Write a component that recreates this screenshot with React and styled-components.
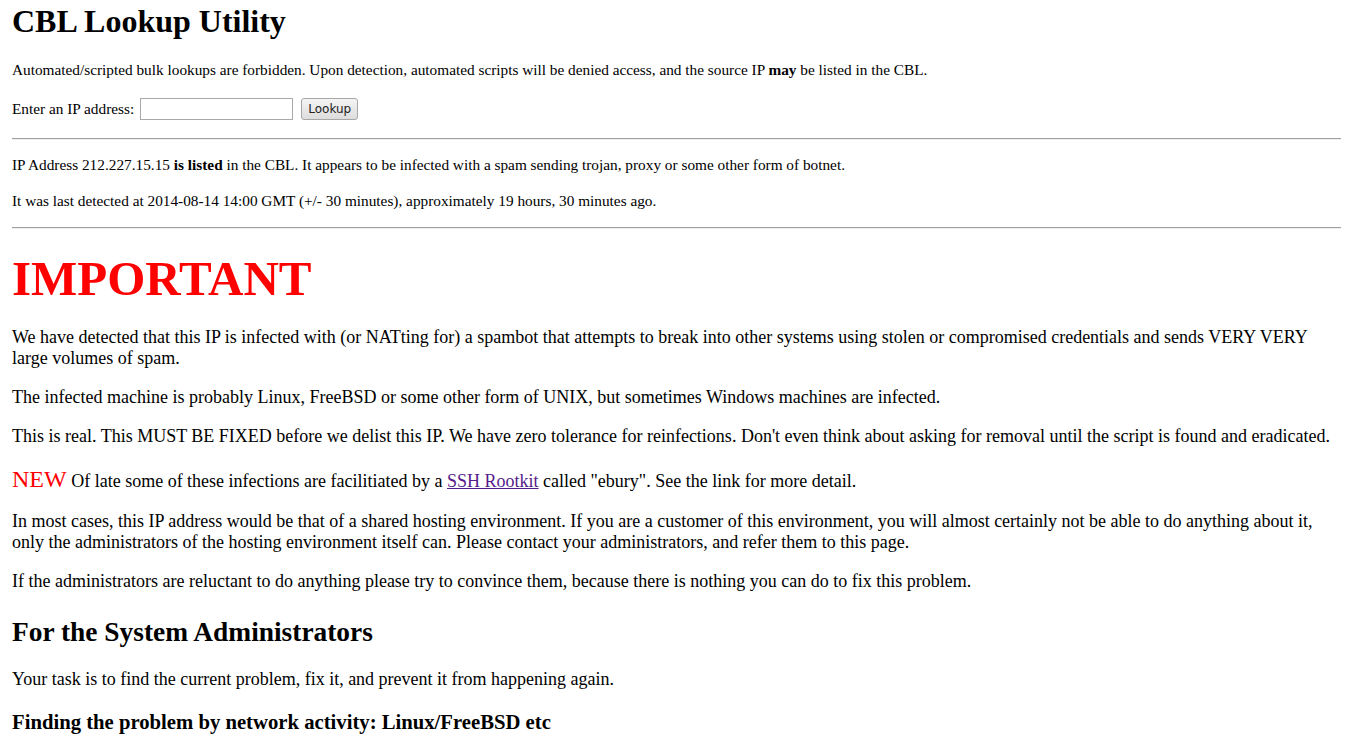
import styled, { createGlobalStyle } from 'styled-components';

const Global = createGlobalStyle`
  html, body {
    margin: 0;
    padding: 0;
    background: #fff;
  }
  body {
    font-family: "Liberation Serif", "Times New Roman", serif;
    color: #000;
  }
`;

const Page = styled.div`
  padding: 3px 10px 0 12px;
`;

const Title = styled.h1`
  font-size: 32px;
  font-weight: bold;
  margin: 0 0 22px;
  line-height: 36px;
`;

const Small = styled.p`
  font-size: 15.3px;
  line-height: 18px;
  margin: 0 0 ${p => p.$gap ?? 18}px;
`;

const Form = styled.form`
  display: flex;
  align-items: center;
  font-size: 15.3px;
  height: 22px;
  margin-bottom: 18px;
`;

const Label = styled.span`
  margin-right: 6px;
`;

const Input = styled.input`
  box-sizing: border-box;
  width: 153px;
  height: 22px;
  border: 1px solid #a9a9a9;
  padding: 1px 3px;
  margin: 0 8px 0 0;
  font-size: 14px;
`;

const Button = styled.button`
  box-sizing: border-box;
  width: 57px;
  height: 22px;
  padding: 0;
  font-family: "DejaVu Sans", Tahoma, sans-serif;
  font-size: 12px;
  color: #222;
  border: 1px solid #a7a7a7;
  border-radius: 3px;
  background: linear-gradient(#f4f4f4, #dddddd);
`;

const Rule = styled.hr`
  border: none;
  border-top: 1px solid #a0a0a0;
  border-bottom: 1px solid #eee;
  margin: 0 0 ${p => p.$after}px;
`;

const Alert = styled.h1`
  color: #ff0000;
  font-size: 49px;
  line-height: 56px;
  font-weight: bold;
  margin: 0 0 20px;
`;

const Para = styled.p`
  font-size: 18px;
  line-height: 21px;
  margin: 0 0 18px;
  padding: ${p => (p.$tall ? '4px 0 1px' : '0')};
`;

const Badge = styled.span`
  color: #ff0000;
  font-size: 24px;
`;

const Link = styled.a`
  color: #551a8b;
`;

const Section = styled.h2`
  font-size: 27.4px;
  line-height: 32px;
  font-weight: bold;
  margin: 24px 0 21px;
`;

const Sub = styled.h3`
  font-size: 20.7px;
  line-height: 24px;
  font-weight: bold;
  margin: 20px 0 0;
`;

export default function App() {
  return (
    <>
      <Global />
      <Page>
        <Title>CBL Lookup Utility</Title>
        <Small $gap={19}>
          Automated/scripted bulk lookups are forbidden. Upon detection, automated scripts will be denied access, and the source IP <b>may</b> be listed in the CBL.
        </Small>
        <Form onSubmit={e => e.preventDefault()}>
          <Label>Enter an IP address:</Label>
          <Input type="text" />
          <Button type="submit">Lookup</Button>
        </Form>
        <Rule $after={16} />
        <Small>
          IP Address 212.227.15.15 <b>is listed</b> in the CBL. It appears to be infected with a spam sending trojan, proxy or some other form of botnet.
        </Small>
        <Small $gap={17}>
          It was last detected at 2014-08-14 14:00 GMT (+/- 30 minutes), approximately 19 hours, 30 minutes ago.
        </Small>
        <Rule $after={22} />
        <Alert>IMPORTANT</Alert>
        <Para>
          We have detected that this IP is infected with (or NATting for) a spambot that attempts to break into other systems using stolen or compromised credentials and sends VERY VERY large volumes of spam.
        </Para>
        <Para>
          The infected machine is probably Linux, FreeBSD or some other form of UNIX, but sometimes Windows machines are infected.
        </Para>
        <Para>
          This is real. This MUST BE FIXED before we delist this IP. We have zero tolerance for reinfections. Don't even think about asking for removal until the script is found and eradicated.
        </Para>
        <Para $tall>
          <Badge>NEW</Badge> Of late some of these infections are facilitiated by a <Link href="#">SSH Rootkit</Link> called "ebury". See the link for more detail.
        </Para>
        <Para>
          In most cases, this IP address would be that of a shared hosting environment. If you are a customer of this environment, you will almost certainly not be able to do anything about it, only the administrators of the hosting environment itself can. Please contact your administrators, and refer them to this page.
        </Para>
        <Para>
          If the administrators are reluctant to do anything please try to convince them, because there is nothing you can do to fix this problem.
        </Para>
        <Section>For the System Administrators</Section>
        <Para>Your task is to find the current problem, fix it, and prevent it from happening again.</Para>
        <Sub>Finding the problem by network activity: Linux/FreeBSD etc</Sub>
      </Page>
    </>
  );
}
